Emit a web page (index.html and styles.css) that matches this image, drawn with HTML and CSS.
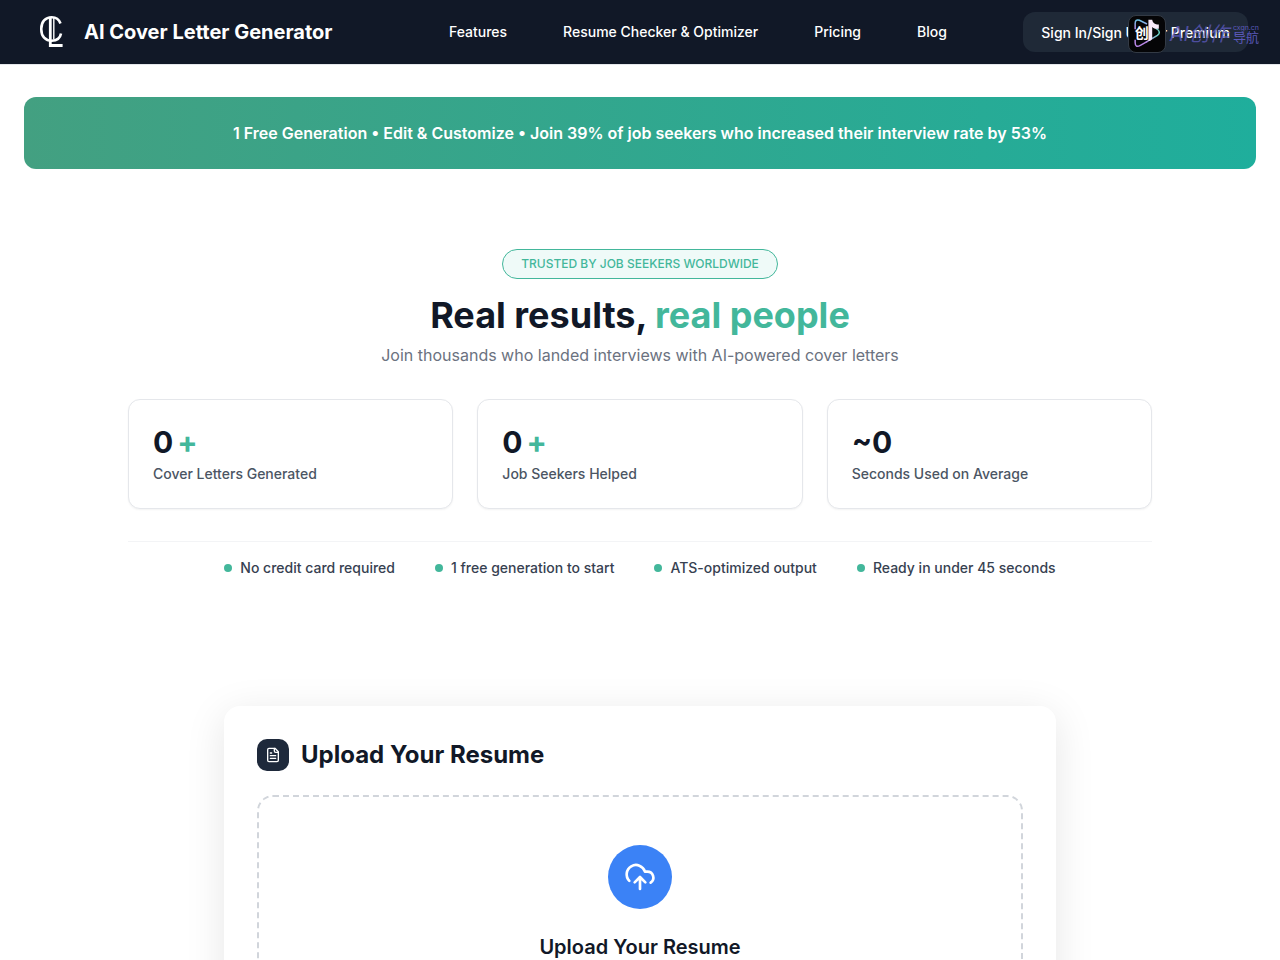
FILE: index.html
```html
<!DOCTYPE html>
<html lang="en">
<head>
	<meta charset="utf-8">
	<meta name="viewport" content="width=device-width, initial-scale=1">
	<title>AI Cover Letter Generator</title>
	<link rel="stylesheet" href="styles.css">
</head>
<body>
	<header class="header">
		<a class="brand" href="#">
			<svg class="brand-logo" viewBox="0 0 40 40" fill="none" stroke="#fff" aria-hidden="true">
				<path d="M28.500 11.500C27 7.500 23.800 5.300 19.700 5.300C13.300 5.300 9.300 9.800 9.300 16.500V17.500C9.300 24.200 13.300 28.700 19.700 28.700C24.800 28.700 28.200 26 29 21.500" stroke-width="2.600"/>
				<path d="M18.300 6V33.500H30.600" stroke-width="2.800"/>
				<path d="M21.800 6V27.500" stroke-width="1.400"/>
			</svg>
			<span>AI Cover Letter Generator</span>
		</a>
		<nav class="nav">
			<a href="#features">Features</a>
			<a href="#checker">Resume Checker &amp; Optimizer</a>
			<a href="#pricing">Pricing</a>
			<a href="#blog">Blog</a>
		</nav>
		<button class="signin" type="button">Sign In/Sign Up for Premium</button>

		<!-- floating badge over the sign in button -->
		<div class="mark">
			<div class="mark-icon">
				<svg viewBox="0 0 38 38" fill="none" aria-hidden="true">
					<defs>
						<linearGradient id="play" x1="0" y1="0" x2="0" y2="1">
							<stop offset="0" stop-color="#6fc5e8"/>
							<stop offset="1" stop-color="#b886e6"/>
						</linearGradient>
						<linearGradient id="side" x1="0" y1="0" x2="1" y2="0">
							<stop offset="0" stop-color="#b886e6"/>
							<stop offset="1" stop-color="#65d6c3"/>
						</linearGradient>
					</defs>
					<path d="M6.500 14V8Q6.500 3 11 4.500L19 8.500" stroke="url(#play)" stroke-width="1.600"/>
					<path d="M6.500 25V28Q6.500 34 12 31L19 27" stroke="#b886e6" stroke-width="1.600"/>
					<path d="M27 12L30 14Q34 17.500 30 20.500L18 27.500" stroke="url(#side)" stroke-width="1.600"/>
					<path d="M20.500 4H24.500C25 7 27 9 31.500 9V13.500C28 13.500 26 13 24.500 11.500V23Q24.500 26 20.500 26.500Z" fill="#f6e9fa"/>
				</svg>
				<span class="mark-char">创</span>
			</div>
			<span class="mark-name">AI创作</span>
			<span class="mark-side"><small>cxgn.cn</small>导航</span>
		</div>
	</header>

	<main>
		<div class="banner">1 Free Generation • Edit &amp; Customize • Join 39% of job seekers who increased their interview rate by 53%</div>

		<section class="results">
			<span class="pill">TRUSTED BY JOB SEEKERS WORLDWIDE</span>
			<h1>Real results, <span class="accent">real people</span></h1>
			<p class="subtitle">Join thousands who landed interviews with AI-powered cover letters</p>

			<div class="stats">
				<div class="stat">
					<div class="stat-value">0<span class="plus">+</span></div>
					<div class="stat-label">Cover Letters Generated</div>
				</div>
				<div class="stat">
					<div class="stat-value">0<span class="plus">+</span></div>
					<div class="stat-label">Job Seekers Helped</div>
				</div>
				<div class="stat">
					<div class="stat-value">~0</div>
					<div class="stat-label">Seconds Used on Average</div>
				</div>
			</div>

			<ul class="perks">
				<li>No credit card required</li>
				<li>1 free generation to start</li>
				<li>ATS-optimized output</li>
				<li>Ready in under 45 seconds</li>
			</ul>
		</section>

		<section class="upload">
			<div class="upload-title">
				<span class="upload-icon">
					<svg viewBox="0 0 24 24" fill="none" stroke="#fff" stroke-width="2" stroke-linecap="round" stroke-linejoin="round" aria-hidden="true">
						<path d="M15 2H6a2 2 0 0 0-2 2v16a2 2 0 0 0 2 2h12a2 2 0 0 0 2-2V7Z"/>
						<path d="M14 2v4a2 2 0 0 0 2 2h4"/>
						<path d="M10 9H8M16 13H8M16 17H8"/>
					</svg>
				</span>
				<h2>Upload Your Resume</h2>
			</div>
			<div class="dropzone">
				<span class="cloud">
					<svg viewBox="0 0 24 24" fill="none" stroke="#fff" stroke-width="2" stroke-linecap="round" stroke-linejoin="round" aria-hidden="true">
						<path d="M4 14.899A7 7 0 1 1 15.710 8h1.790a4.500 4.500 0 0 1 2.500 8.242"/>
						<path d="M12 12v9M16 16l-4-4-4 4"/>
					</svg>
				</span>
				<h3>Upload Your Resume</h3>
			</div>
		</section>
	</main>
</body>
</html>
```

FILE: styles.css
```css
* {
	box-sizing: border-box;
}

body {
	margin: 0;
	font-family: Inter, "Noto Sans CJK SC", sans-serif;
	font-size: 16px;
	line-height: 24px;
	color: #111827;
	background-color: #fff;
}

h1, h2, h3, p, ul {
	margin: 0;
	padding: 0;
}

a {
	color: inherit;
	text-decoration: none;
}

.header {
	position: relative;
	display: flex;
	justify-content: space-between;
	align-items: center;
	height: 65px;
	padding: 0 32px;
	color: #fff;
	background-color: #111827;
	border-bottom: 1px solid #e5e7eb;
}

.brand {
	display: flex;
	align-items: center;
	gap: 12px;
	font-size: 20px;
	font-weight: 700;
}

.brand-logo {
	width: 40px;
	height: 40px;
}

.nav {
	display: flex;
	gap: 56px;
	margin-left: 40px;
	font-size: 14px;
	font-weight: 500;
}

.signin {
	height: 40px;
	padding: 0 18px;
	font-family: inherit;
	font-size: 14px;
	font-weight: 500;
	color: #fff;
	background-color: #1f2937;
	border: none;
	border-radius: 12px;
	cursor: pointer;
}

.mark {
	position: absolute;
	top: 15px;
	right: 21px;
	display: flex;
	align-items: center;
	gap: 4px;
	color: #5a58b8;
	pointer-events: none;
}

.mark-icon {
	position: relative;
	width: 38px;
	height: 38px;
	background-color: #050507;
	border: 1px solid #333a45;
	border-radius: 8px;
}

.mark-icon svg {
	display: block;
}

.mark-char {
	position: absolute;
	top: 5px;
	left: 6px;
	font-size: 14px;
	font-weight: 700;
	color: #fff;
}

.mark-name {
	font-size: 20px;
	font-style: italic;
	opacity: 0.8;
}

.mark-side {
	display: flex;
	flex-direction: column;
	font-size: 13px;
	line-height: 13px;
}

.mark-side small {
	font-size: 7px;
	line-height: 7px;
}

.banner {
	margin: 32px 24px 0;
	padding: 24px;
	font-weight: 600;
	color: #fff;
	text-align: center;
	background: linear-gradient(to right, #43a081, #1fae9c);
	border-radius: 12px;
}

.results {
	display: flex;
	flex-direction: column;
	align-items: center;
	max-width: 1024px;
	margin: 80px auto 0;
}

.pill {
	padding: 6px 18px;
	font-size: 12px;
	line-height: 16px;
	font-weight: 500;
	color: #43b79b;
	background-color: #effaf8;
	border: 1px solid #43b79b;
	border-radius: 16px;
}

h1 {
	margin-top: 16px;
	font-size: 36px;
	line-height: 40px;
	font-weight: 700;
}

.accent, .plus {
	color: #43b79b;
}

.subtitle {
	margin-top: 8px;
	color: #6b7280;
}

.stats {
	display: grid;
	grid-template-columns: repeat(3, 1fr);
	gap: 24px;
	width: 100%;
	margin-top: 32px;
}

.stat {
	padding: 24px;
	background-color: #fff;
	border: 1px solid #e5e7eb;
	border-radius: 12px;
	box-shadow: 0 1px 2px rgba(0, 0, 0, 0.05);
}

.stat-value {
	font-size: 30px;
	line-height: 36px;
	font-weight: 700;
}

.plus {
	margin-left: 4px;
}

.stat-label {
	margin-top: 4px;
	font-size: 14px;
	line-height: 20px;
	font-weight: 500;
	color: #4b5563;
}

.perks {
	display: flex;
	flex-wrap: wrap;
	justify-content: center;
	gap: 40px;
	width: 100%;
	margin-top: 32px;
	padding-top: 16px;
	list-style: none;
	font-size: 14px;
	line-height: 20px;
	font-weight: 500;
	color: #374151;
	border-top: 1px solid #f3f4f6;
}

.perks li {
	display: flex;
	align-items: center;
	gap: 8px;
}

.perks li::before {
	content: "";
	width: 8px;
	height: 8px;
	background-color: #43b79b;
	border-radius: 50%;
}

.upload {
	max-width: 832px;
	margin: 128px auto 0;
	padding: 33px;
	background-color: #fff;
	border-radius: 16px;
	box-shadow: 0 8px 40px rgba(0, 0, 0, 0.1);
}

.upload-title {
	display: flex;
	align-items: center;
	gap: 12px;
}

.upload-icon {
	display: flex;
	align-items: center;
	justify-content: center;
	width: 32px;
	height: 32px;
	background-color: #1e293b;
	border-radius: 10px;
}

.upload-icon svg {
	width: 16px;
	height: 16px;
}

h2 {
	font-size: 24px;
	line-height: 32px;
	font-weight: 700;
}

.dropzone {
	display: flex;
	flex-direction: column;
	align-items: center;
	margin-top: 24px;
	padding: 48px;
	border: 2px dashed #d1d5db;
	border-radius: 16px;
}

.cloud {
	display: flex;
	align-items: center;
	justify-content: center;
	width: 64px;
	height: 64px;
	background-color: #3b82f6;
	border-radius: 50%;
}

.cloud svg {
	width: 32px;
	height: 32px;
}

h3 {
	margin-top: 24px;
	font-size: 20px;
	line-height: 28px;
	font-weight: 600;
}
```
